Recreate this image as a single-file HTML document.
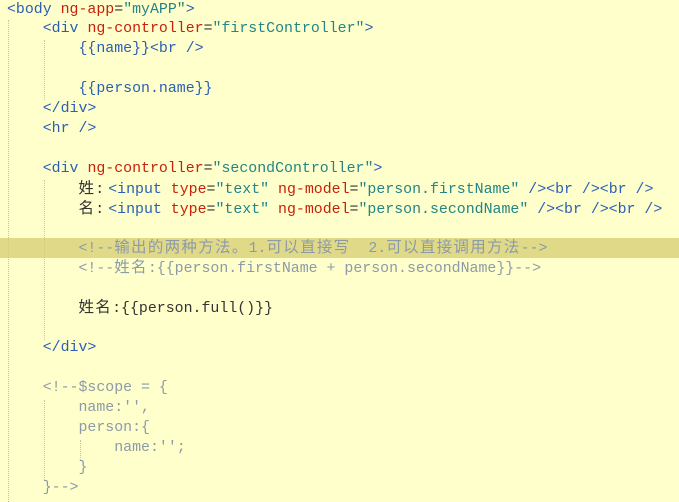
<!DOCTYPE html>
<html><head><meta charset="utf-8"><style>
html,body{margin:0;padding:0;}
body{width:679px;height:502px;background:#ffffcc;position:relative;overflow:hidden;
font-family:"Liberation Mono","Noto Sans CJK SC",monospace;font-size:14.9px;}
.l{position:absolute;left:7px;height:20px;line-height:20px;white-space:pre;color:#2b5fb4;}
.t{color:#2b5fb4}.a{color:#c8200a}.v{color:#238585}.p{color:#333}.c{color:#8d9aa8}.d{color:#333}
.k{display:inline-block;width:16.8px;font-size:15.5px;}
.m{margin-right:4px}
.hl{position:absolute;left:0;width:679px;top:238px;height:20px;background:#e0da88;}
.g{position:absolute;width:0;border-left:1px dotted #c4c4b0;}
</style></head><body>
<div class="hl"></div>
<div class="g" style="left:8px;top:20px;height:482px"></div>
<div class="g" style="left:44px;top:40px;height:60px"></div>
<div class="g" style="left:44px;top:180px;height:160px"></div>
<div class="g" style="left:44px;top:400px;height:80px"></div>
<div class="g" style="left:80px;top:440px;height:20px"></div>
<div class="l" style="top:0">&lt;body <span class="a">ng-app</span><span class="p">=</span><span class="v">"myAPP"</span>&gt;</div>
<div class="l" style="top:19px">    &lt;div <span class="a">ng-controller</span><span class="p">=</span><span class="v">"firstController"</span>&gt;</div>
<div class="l" style="top:39px">        {{name}}&lt;br /&gt;</div>
<div class="l" style="top:79px">        {{person.name}}</div>
<div class="l" style="top:99px">    &lt;/div&gt;</div>
<div class="l" style="top:119px">    &lt;hr /&gt;</div>
<div class="l" style="top:159px">    &lt;div <span class="a">ng-controller</span><span class="p">=</span><span class="v">"secondController"</span>&gt;</div>
<div class="l" style="top:179px">        <span class="d m"><span class="k">姓</span>:</span>&lt;input <span class="a">type</span><span class="p">=</span><span class="v">"text"</span> <span class="a">ng-model</span><span class="p">=</span><span class="v">"person.firstName"</span> /&gt;&lt;br /&gt;&lt;br /&gt;</div>
<div class="l" style="top:199px">        <span class="d m"><span class="k">名</span>:</span>&lt;input <span class="a">type</span><span class="p">=</span><span class="v">"text"</span> <span class="a">ng-model</span><span class="p">=</span><span class="v">"person.secondName"</span> /&gt;&lt;br /&gt;&lt;br /&gt;</div>
<div class="l c" style="top:238px">        &lt;!--<span class="k">输</span><span class="k">出</span><span class="k">的</span><span class="k">两</span><span class="k">种</span><span class="k">方</span><span class="k">法</span><span class="k">。</span>1.<span class="k">可</span><span class="k">以</span><span class="k">直</span><span class="k">接</span><span class="k">写</span>  2.<span class="k">可</span><span class="k">以</span><span class="k">直</span><span class="k">接</span><span class="k">调</span><span class="k">用</span><span class="k">方</span><span class="k">法</span>--&gt;</div>
<div class="l c" style="top:258px">        &lt;!--<span class="k">姓</span><span class="k">名</span>:{{person.firstName + person.secondName}}--&gt;</div>
<div class="l" style="top:298px">        <span class="d"><span class="k">姓</span><span class="k">名</span>:{{person.full()}}</span></div>
<div class="l" style="top:338px">    &lt;/div&gt;</div>
<div class="l c" style="top:378px">    &lt;!--$scope = {</div>
<div class="l c" style="top:398px">        name:'',</div>
<div class="l c" style="top:418px">        person:{</div>
<div class="l c" style="top:438px">            name:'';</div>
<div class="l c" style="top:458px">        }</div>
<div class="l c" style="top:478px">    }--&gt;</div>
</body></html>
